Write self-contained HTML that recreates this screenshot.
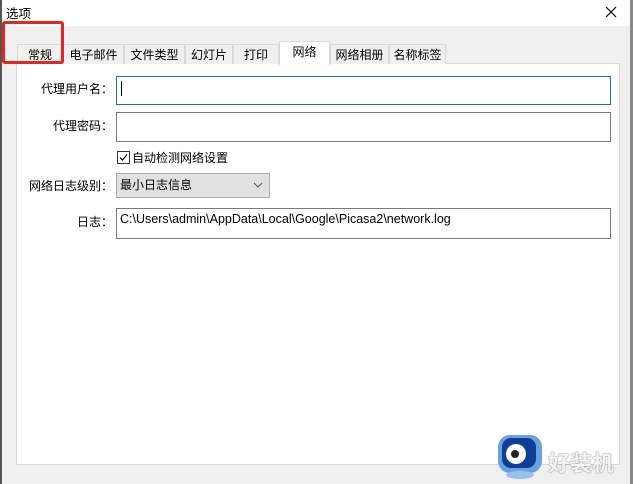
<!DOCTYPE html>
<html><head><meta charset="utf-8"><style>
body{margin:0;width:633px;height:484px;overflow:hidden;background:#f0f0f0;font-family:"Liberation Sans","Noto Sans CJK SC",sans-serif;font-size:12px;color:#000;position:relative}
.a{position:absolute}
.tab{position:absolute;top:44px;height:20px;background:#f0f0f0;border:1px solid #d9d9d9;border-bottom:none;box-sizing:border-box;line-height:20px;text-align:center;font-size:12px}
.inp{position:absolute;background:#fff;border:1px solid #7a7a7a;box-sizing:border-box}
.lbl{position:absolute;width:100px;text-align:right;left:13px;font-size:12px}
</style></head><body>
<div class="a" style="left:0;top:0;width:633px;height:26px;background:#fff"></div>
<div class="a" style="left:0;top:0;width:2px;height:484px;background:#555"></div>
<div class="a" style="left:630px;top:0;width:3px;height:484px;background:#888"></div>
<div class="a" style="left:6px;top:3px;font-size:12.5px">选项</div>
<svg class="a" style="left:605px;top:6px" width="12" height="12"><path d="M1 1L11 11M11 1L1 11" stroke="#000" stroke-width="1.2"/></svg>
<div class="a" style="left:16px;top:63px;width:604px;height:402px;background:#fff;border:1px solid #d9d9d9;box-sizing:border-box"></div>
<div class="tab" style="left:17px;width:46px">常规</div>
<div class="tab" style="left:63px;width:61px">电子邮件</div>
<div class="tab" style="left:124px;width:61px">文件类型</div>
<div class="tab" style="left:185px;width:48px">幻灯片</div>
<div class="tab" style="left:233px;width:46px">打印</div>
<div class="tab" style="left:279px;top:41px;height:24px;width:51px;background:#fff;line-height:20px">网络</div>
<div class="tab" style="left:330px;width:59px">网络相册</div>
<div class="tab" style="left:389px;width:57px">名称标签</div>
<div class="a" style="left:2px;top:21px;width:62px;height:43px;border:3px solid #e3271f;border-radius:3px;box-sizing:border-box"></div>
<div class="lbl" style="top:80px">代理用户名：</div>
<div class="inp" style="left:116px;top:76px;width:495px;height:29px;border-color:#1f6f8f"></div>
<div class="a" style="left:121px;top:81px;width:1px;height:15px;background:#000"></div>
<div class="lbl" style="top:117px">代理密码：</div>
<div class="inp" style="left:116px;top:112px;width:495px;height:30px"></div>
<div class="a" style="left:117px;top:151px;width:13px;height:13px;border:1px solid #333;box-sizing:border-box;background:#fff"></div>
<svg class="a" style="left:117px;top:151px" width="13" height="13"><path d="M3 6.5L5.5 9L10 3.5" stroke="#000" fill="none" stroke-width="1.2"/></svg>
<div class="a" style="left:132px;top:149px;font-size:12px">自动检测网络设置</div>
<div class="lbl" style="top:177px">网络日志级别：</div>
<div class="a" style="left:116px;top:173px;width:154px;height:25px;background:#e1e1e1;border:1px solid #adadad;box-sizing:border-box"></div>
<div class="a" style="left:120px;top:176px;font-size:12px">最小日志信息</div>
<svg class="a" style="left:253px;top:182px" width="10" height="7"><path d="M1 1L5 5L9 1" stroke="#555" fill="none"/></svg>
<div class="lbl" style="top:213px">日志：</div>
<div class="inp" style="left:116px;top:208px;width:495px;height:31px"></div>
<div class="a" style="left:120px;top:212px;font-size:12.5px">C:\Users\admin\AppData\Local\Google\Picasa2\network.log</div>
<svg class="a" style="left:496px;top:433px" width="50" height="48"><rect x="2" y="2" width="44" height="38" rx="12" fill="#6aa0e0"/><rect x="6" y="5" width="34" height="30" rx="9" fill="#0d3f9a"/><circle cx="20" cy="21" r="10" fill="#fff"/><circle cx="19" cy="21" r="4" fill="#222"/><ellipse cx="24" cy="42" rx="14" ry="4" fill="#9cc0ec"/></svg>
<div class="a" style="left:548px;top:446px;font-size:22px;color:#f4f4f4;font-weight:bold;text-shadow:0 0 1px #777,0 0 1px #777">好装机</div>
</body></html>
